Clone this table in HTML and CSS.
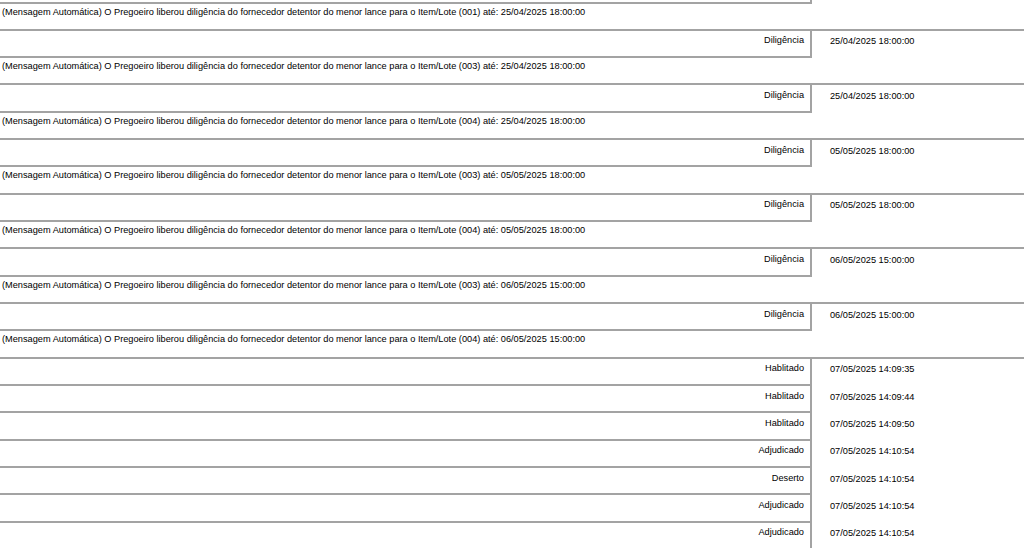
FILE: index.html
```html
<!DOCTYPE html>
<html lang="pt-BR">
<head>
    <meta charset="UTF-8">
    <meta name="viewport" content="width=device-width, initial-scale=1.0">
    <title>Histórico do Pregão</title>
    <link rel="stylesheet" href="styles.css">
</head>
<body>
    <!-- Histórico de eventos -->
    <table class="historico">
        <colgroup>
            <col class="col-evento">
            <col class="col-data">
        </colgroup>
        <tr class="spacer">
            <td class="status"></td>
            <td class="data"></td>
        </tr>
        <tr>
            <td class="msg" colspan="2">(Mensagem Automática) O Pregoeiro liberou diligência do fornecedor detentor do menor lance para o Item/Lote (001) até: 25/04/2025 18:00:00</td>
        </tr>
        <tr>
            <td class="status">Diligência</td>
            <td class="data">25/04/2025 18:00:00</td>
        </tr>
        <tr>
            <td class="msg" colspan="2">(Mensagem Automática) O Pregoeiro liberou diligência do fornecedor detentor do menor lance para o Item/Lote (003) até: 25/04/2025 18:00:00</td>
        </tr>
        <tr>
            <td class="status">Diligência</td>
            <td class="data">25/04/2025 18:00:00</td>
        </tr>
        <tr>
            <td class="msg" colspan="2">(Mensagem Automática) O Pregoeiro liberou diligência do fornecedor detentor do menor lance para o Item/Lote (004) até: 25/04/2025 18:00:00</td>
        </tr>
        <tr>
            <td class="status">Diligência</td>
            <td class="data">05/05/2025 18:00:00</td>
        </tr>
        <tr>
            <td class="msg" colspan="2">(Mensagem Automática) O Pregoeiro liberou diligência do fornecedor detentor do menor lance para o Item/Lote (003) até: 05/05/2025 18:00:00</td>
        </tr>
        <tr>
            <td class="status">Diligência</td>
            <td class="data">05/05/2025 18:00:00</td>
        </tr>
        <tr>
            <td class="msg" colspan="2">(Mensagem Automática) O Pregoeiro liberou diligência do fornecedor detentor do menor lance para o Item/Lote (004) até: 05/05/2025 18:00:00</td>
        </tr>
        <tr>
            <td class="status">Diligência</td>
            <td class="data">06/05/2025 15:00:00</td>
        </tr>
        <tr>
            <td class="msg" colspan="2">(Mensagem Automática) O Pregoeiro liberou diligência do fornecedor detentor do menor lance para o Item/Lote (003) até: 06/05/2025 15:00:00</td>
        </tr>
        <tr>
            <td class="status">Diligência</td>
            <td class="data">06/05/2025 15:00:00</td>
        </tr>
        <tr>
            <td class="msg" colspan="2">(Mensagem Automática) O Pregoeiro liberou diligência do fornecedor detentor do menor lance para o Item/Lote (004) até: 06/05/2025 15:00:00</td>
        </tr>
        <tr>
            <td class="status">Hablitado</td>
            <td class="data">07/05/2025 14:09:35</td>
        </tr>
        <tr>
            <td class="status">Hablitado</td>
            <td class="data">07/05/2025 14:09:44</td>
        </tr>
        <tr>
            <td class="status">Hablitado</td>
            <td class="data">07/05/2025 14:09:50</td>
        </tr>
        <tr>
            <td class="status">Adjudicado</td>
            <td class="data">07/05/2025 14:10:54</td>
        </tr>
        <tr>
            <td class="status">Deserto</td>
            <td class="data">07/05/2025 14:10:54</td>
        </tr>
        <tr>
            <td class="status">Adjudicado</td>
            <td class="data">07/05/2025 14:10:54</td>
        </tr>
        <tr>
            <td class="status">Adjudicado</td>
            <td class="data">07/05/2025 14:10:54</td>
        </tr>
    </table>
</body>
</html>
```

FILE: styles.css
```css
html {
    overflow: hidden;
}
body {
    margin: 0;
    font-family: "Liberation Sans", Arial, sans-serif;
    font-size: 9.21px;
    color: #000;
    background: #fff;
}
.historico {
    width: 100%;
    table-layout: fixed;
    border-collapse: separate;
    border-spacing: 0;
}
.col-evento {
    width: 812px;
}
.historico td {
    padding: 4.5px 0 9.83px 0;
    line-height: 11px;
    vertical-align: top;
    white-space: nowrap;
}
.historico .msg {
    padding-left: 2px;
    padding-top: 3px;
    padding-bottom: 11.33px;
    border-bottom: 2px solid #a3a3a3;
}
.historico .status {
    text-align: right;
    padding-right: 6px;
    border-right: 2px solid #a3a3a3;
    border-bottom: 2px solid #a3a3a3;
}
.historico .data {
    padding-left: 18px;
    padding-top: 5.5px;
    padding-bottom: 8.83px;
}
.historico .spacer td {
    height: 1.5px;
    padding: 0;
    line-height: 0;
}
```
